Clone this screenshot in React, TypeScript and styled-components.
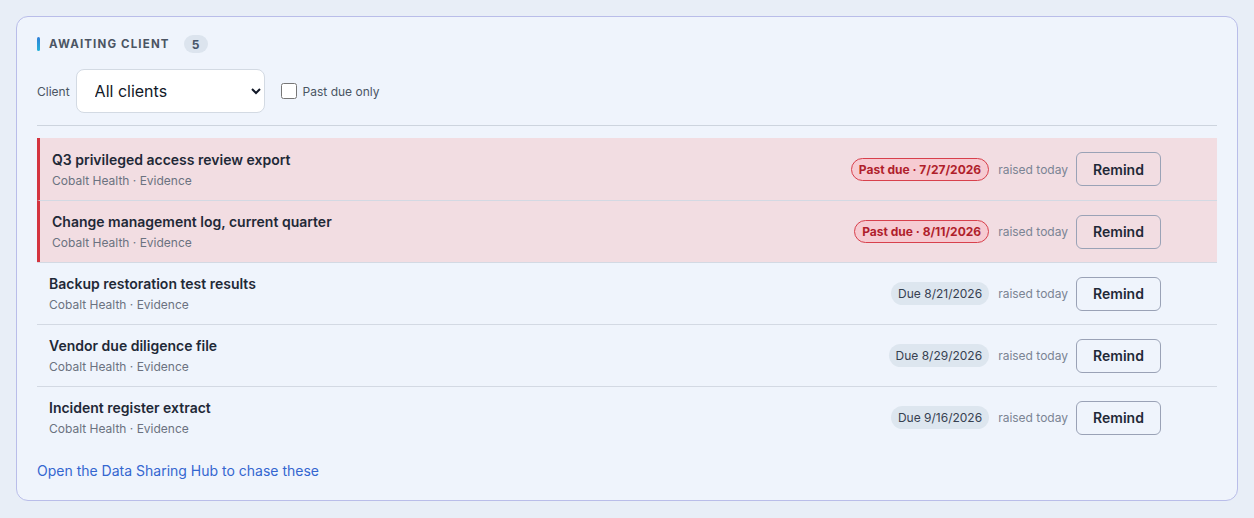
import React, { useState } from 'react';
import styled, { createGlobalStyle } from 'styled-components';

const GlobalStyle = createGlobalStyle`
  html, body {
    margin: 0;
    background: #e8eef7;
    font-family: Inter, "Noto Sans", sans-serif;
  }
`;

const Page = styled.div`
  padding: 16px;
`;

const Card = styled.section`
  border: 1px solid #b9bde9;
  border-radius: 12px;
  background: #eff4fc;
  padding: 19px 20px 20px 20px;
  min-height: 485px;
  box-sizing: border-box;
`;

const Header = styled.div`
  display: flex;
  align-items: center;
  height: 16px;
`;

const Accent = styled.span`
  width: 3px;
  height: 14px;
  border-radius: 2px;
  background: linear-gradient(180deg, #2f7ed8, #27b3d9);
  margin-right: 9px;
`;

const Title = styled.h2`
  margin: 0;
  font-size: 11.5px;
  font-weight: 700;
  letter-spacing: 0.1em;
  color: #4b5563;
  text-transform: uppercase;
`;

const Count = styled.span`
  margin-left: 14px;
  min-width: 24px;
  height: 18px;
  border-radius: 9px;
  background: #dce4ee;
  color: #475569;
  font-size: 12px;
  font-weight: 700;
  display: inline-flex;
  align-items: center;
  justify-content: center;
`;

const Filters = styled.div`
  display: flex;
  align-items: center;
  margin-top: 17px;
  padding-bottom: 12px;
  border-bottom: 1px solid #cdd4de;
`;

const Label = styled.label`
  font-size: 12px;
  color: #4b5563;
  margin-right: 6px;
`;

const Select = styled.select`
  width: 189px;
  height: 44px;
  padding: 0 12px 0 14px;
  border: 1px solid #d3dae3;
  border-radius: 8px;
  background: #ffffff;
  font-family: inherit;
  font-size: 16px;
  color: #111827;
`;

const CheckLabel = styled.label`
  display: flex;
  align-items: center;
  margin-left: 16px;
  font-size: 12px;
  color: #4b5563;
  gap: 6px;

  input {
    margin: 0;
    width: 16px;
    height: 16px;
  }
`;

const List = styled.div`
  margin-top: 12px;
`;

const Row = styled.div<{ $overdue: boolean }>`
  display: flex;
  align-items: center;
  height: 62px;
  box-sizing: border-box;
  padding: 0 56px 0 12px;
  background: ${(p) => (p.$overdue ? '#f2dde2' : 'transparent')};
  border-left: ${(p) => (p.$overdue ? '3px solid #d4343f' : 'none')};
  & + & {
    border-top: 1px solid #d3d9e3;
  }
`;

const Info = styled.div`
  flex: 1;
  display: flex;
  flex-direction: column;
  gap: 5px;
`;

const ItemTitle = styled.div`
  font-size: 14px;
  font-weight: 600;
  color: #1f2937;
`;

const Meta = styled.div`
  font-size: 12px;
  color: #6b7280;
`;

const DueBadge = styled.span<{ $overdue: boolean }>`
  font-size: 12px;
  font-weight: ${(p) => (p.$overdue ? 700 : 400)};
  padding: 0 7px;
  height: ${(p) => (p.$overdue ? '21px' : '23px')};
  line-height: ${(p) => (p.$overdue ? '21px' : '23px')};
  border-radius: 12px;
  color: ${(p) => (p.$overdue ? '#b01e2b' : '#374151')};
  background: ${(p) => (p.$overdue ? '#f6cbd2' : '#dde6ef')};
  border: ${(p) => (p.$overdue ? '1px solid #d8404c' : 'none')};
`;

const Raised = styled.span`
  font-size: 12px;
  color: #7b8494;
  margin-left: 9px;
`;

const RemindButton = styled.button`
  margin-left: 8px;
  width: 85px;
  height: 34px;
  border: 1px solid #9aa2b6;
  border-radius: 6px;
  background: transparent;
  font-family: inherit;
  font-size: 14px;
  font-weight: 600;
  color: #1f2937;
  cursor: pointer;
`;

const HubLink = styled.a`
  display: inline-block;
  margin-top: 14px;
  font-size: 14px;
  color: #3466d0;
  text-decoration: none;
`;

type Request = {
  id: number;
  title: string;
  due: string;
  overdue: boolean;
};

const requests: Request[] = [
  { id: 1, title: 'Q3 privileged access review export', due: '7/27/2026', overdue: true },
  { id: 2, title: 'Change management log, current quarter', due: '8/11/2026', overdue: true },
  { id: 3, title: 'Backup restoration test results', due: '8/21/2026', overdue: false },
  { id: 4, title: 'Vendor due diligence file', due: '8/29/2026', overdue: false },
  { id: 5, title: 'Incident register extract', due: '9/16/2026', overdue: false },
];

const App: React.FC = () => {
  const [pastDueOnly, setPastDueOnly] = useState(false);
  const shown = pastDueOnly ? requests.filter((r) => r.overdue) : requests;

  return (
    <Page>
      <GlobalStyle />
      <Card>
        <Header>
          <Accent />
          <Title>Awaiting client</Title>
          <Count>{requests.length}</Count>
        </Header>
        <Filters>
          <Label htmlFor="client">Client</Label>
          <Select id="client" defaultValue="all">
            <option value="all">All clients</option>
            <option value="cobalt">Cobalt Health</option>
          </Select>
          <CheckLabel>
            <input
              type="checkbox"
              checked={pastDueOnly}
              onChange={(e) => setPastDueOnly(e.target.checked)}
            />
            Past due only
          </CheckLabel>
        </Filters>
        <List>
          {shown.map((r) => (
            <Row key={r.id} $overdue={r.overdue}>
              <Info>
                <ItemTitle>{r.title}</ItemTitle>
                <Meta>Cobalt Health · Evidence</Meta>
              </Info>
              <DueBadge $overdue={r.overdue}>
                {r.overdue ? `Past due · ${r.due}` : `Due ${r.due}`}
              </DueBadge>
              <Raised>raised today</Raised>
              <RemindButton>Remind</RemindButton>
            </Row>
          ))}
        </List>
        <HubLink href="#">Open the Data Sharing Hub to chase these</HubLink>
      </Card>
    </Page>
  );
};

export default App;
